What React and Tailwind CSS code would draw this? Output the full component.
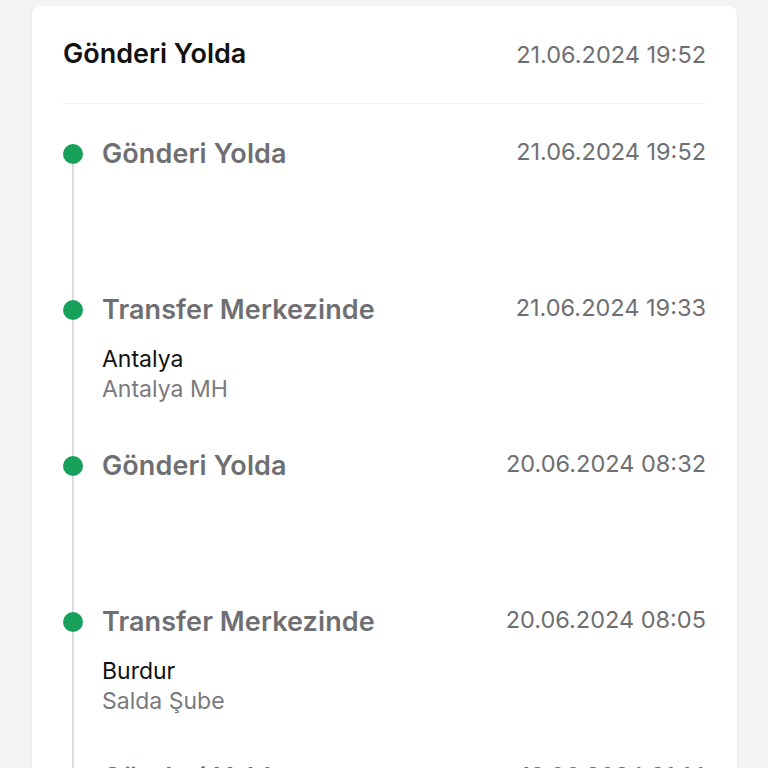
const events = [
  { title: 'Gönderi Yolda', date: '21.06.2024 19:52' },
  { title: 'Transfer Merkezinde', date: '21.06.2024 19:33', city: 'Antalya', branch: 'Antalya MH' },
  { title: 'Gönderi Yolda', date: '20.06.2024 08:32' },
  { title: 'Transfer Merkezinde', date: '20.06.2024 08:05', city: 'Burdur', branch: 'Salda Şube' },
  { title: 'Gönderi Yolda', date: '19.06.2024 21:14' },
];

const TimelineItem = ({ item, first }) => (
  <div className="flex h-[156px]">
    <div className="flex w-[39px] shrink-0 flex-col">
      <div className={`ml-[9px] h-[6px] w-[2px] ${first ? '' : 'bg-[#dcdcdf]'}`} />
      <div className="h-5 w-5 rounded-full bg-[#17a05a]" />
      <div className="ml-[9px] w-[2px] flex-1 bg-[#dcdcdf]" />
    </div>
    <div className="flex-1">
      <div className="flex h-8 items-center justify-between">
        <span className="text-[27px] font-semibold tracking-[0.1px] text-[#6f6f73]">{item.title}</span>
        <span className="-mt-1 text-[23.5px] text-[#6f6f73]">{item.date}</span>
      </div>
      {item.city && (
        <div className="mt-[18px] text-[23px] leading-[30px]">
          <p className="text-[#111]">{item.city}</p>
          <p className="text-[#7a7a7e]">{item.branch}</p>
        </div>
      )}
    </div>
  </div>
);

export default function App() {
  return (
    <div className="min-h-screen bg-[#f3f4f6] px-8 pt-[6px] font-['Inter',sans-serif]">
      <div className="w-[705px] rounded-lg bg-white px-[31px] shadow-sm">
        <div className="flex h-[98px] items-center justify-between border-b border-[#f0f0f2]">
          <h2 className="text-[27px] font-semibold text-[#111]">Gönderi Yolda</h2>
          <span className="text-[23.5px] text-[#6f6f73]">21.06.2024 19:52</span>
        </div>
        <div className="pt-[34px]">
          {events.map((item, i) => (
            <TimelineItem key={i} item={item} first={i === 0} />
          ))}
        </div>
      </div>
    </div>
  );
}
